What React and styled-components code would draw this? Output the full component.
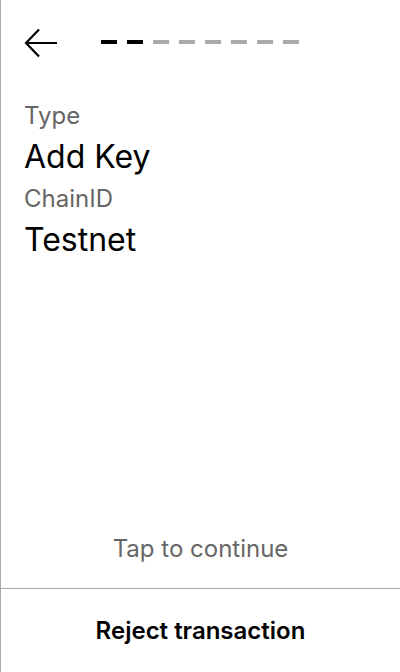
import React from "react";
import styled, { createGlobalStyle } from "styled-components";

const Global = createGlobalStyle`
  html, body { margin: 0; padding: 0; background: #fff; }
  body { font-family: Inter, "Noto Sans", sans-serif; -webkit-font-smoothing: antialiased; }
  * { box-sizing: border-box; }
`;

const Screen = styled.div`
  width: 400px;
  height: 672px;
  display: flex;
  flex-direction: column;
  border-left: 1px solid #aaaaaa;
  background: #fff;
`;

const Header = styled.div`
  display: flex;
  align-items: center;
  height: 86px;
  padding: 0 0 0 23px;
`;

const BackButton = styled.button`
  display: flex;
  align-items: center;
  justify-content: center;
  width: 34px;
  height: 30px;
  padding: 0;
  margin: 0;
  border: none;
  background: none;
  cursor: pointer;
`;

const Progress = styled.div`
  display: flex;
  gap: 10px;
  margin-left: 43px;
  margin-bottom: 2px;
`;

const Dash = styled.span`
  display: block;
  width: 16px;
  height: 4px;
  background: ${(p) => (p.$done ? "#000" : "#aaaaaa")};
`;

const Content = styled.div`
  flex: 1;
  display: flex;
  flex-direction: column;
  padding: 14px 23px 0;
`;

const Label = styled.div`
  font-size: 24px;
  line-height: 32px;
  color: #666666;
  margin-bottom: 1px;
`;

const Value = styled.div`
  font-size: 32px;
  line-height: 48px;
  color: #000;
  margin-bottom: 2px;
`;

const Hint = styled.div`
  text-align: center;
  font-size: 24px;
  line-height: 32px;
  color: #666666;
  padding-bottom: 23px;
`;

const Divider = styled.hr`
  margin: 0;
  border: none;
  border-top: 1px solid #aaaaaa;
`;

const RejectButton = styled.button`
  height: 83px;
  border: none;
  background: none;
  font-family: Inter, "Noto Sans", sans-serif;
  font-size: 24px;
  font-weight: 600;
  color: #000;
  cursor: pointer;
`;

const ArrowIcon = () => (
  <svg width="34" height="30" viewBox="0 0 34 30" fill="none">
    <path d="M33 15H3M15 1.5L2 15L15 28.5" stroke="#000" strokeWidth="2.2" strokeLinecap="butt" strokeLinejoin="miter" />
  </svg>
);

const steps = [true, true, false, false, false, false, false, false];

export default function App() {
  return (
    <>
      <Global />
      <Screen>
        <Header>
          <BackButton aria-label="Back">
            <ArrowIcon />
          </BackButton>
          <Progress>
            {steps.map((d, i) => (
              <Dash key={i} $done={d} />
            ))}
          </Progress>
        </Header>
        <Content>
          <Label>Type</Label>
          <Value>Add Key</Value>
          <Label>ChainID</Label>
          <Value>Testnet</Value>
        </Content>
        <Hint>Tap to continue</Hint>
        <Divider />
        <RejectButton>Reject transaction</RejectButton>
      </Screen>
    </>
  );
}
